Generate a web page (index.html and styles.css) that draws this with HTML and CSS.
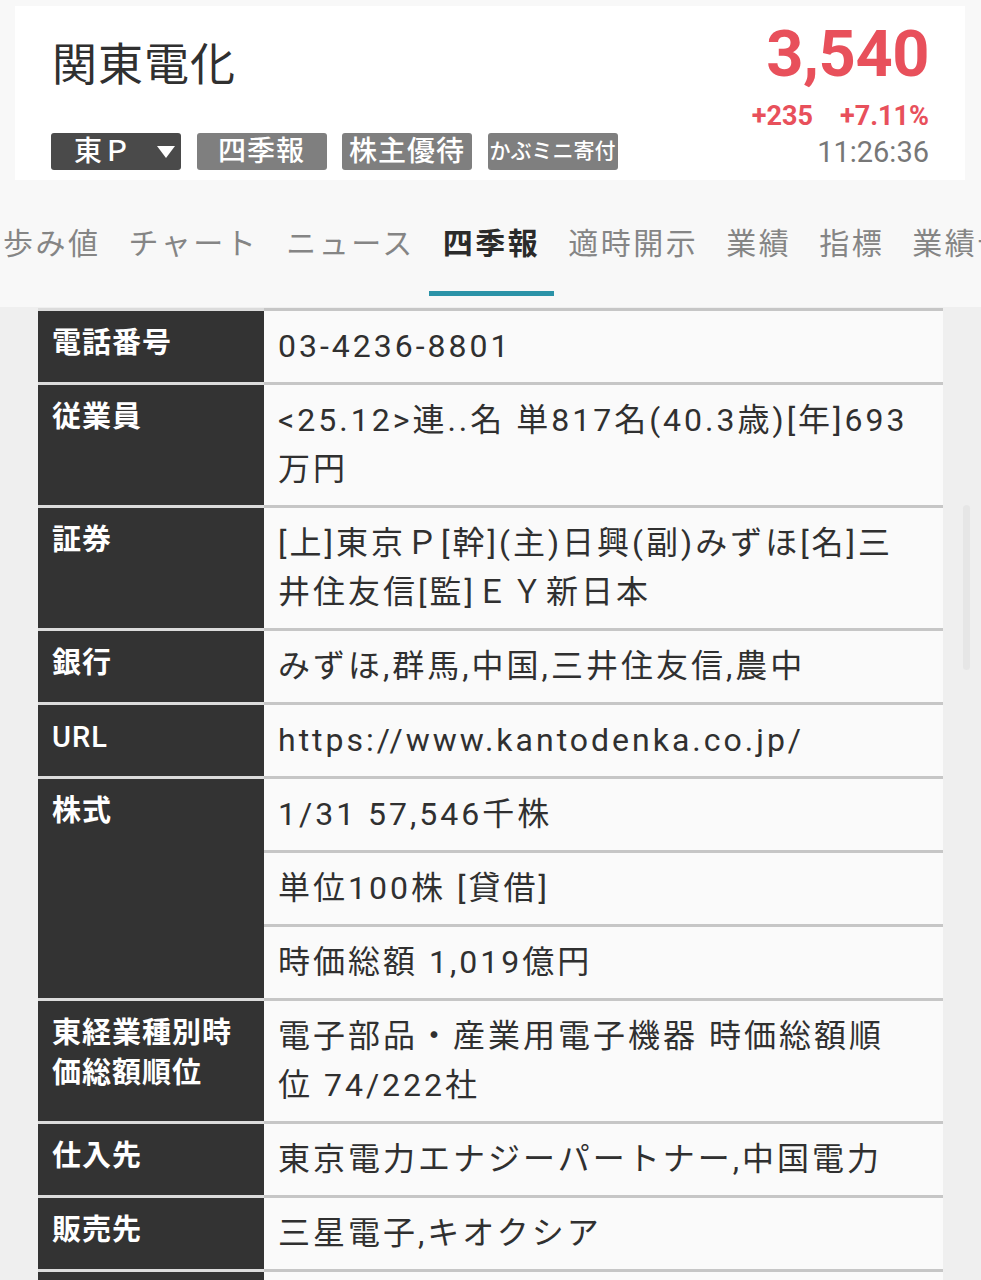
FILE: index.html
```html
<!DOCTYPE html>
<html lang="ja">
<head>
<meta charset="utf-8">
<title>関東電化 四季報</title>
<link rel="stylesheet" href="styles.css">
</head>
<body>
<header class="top">
  <div class="card">
    <div class="card-left">
      <h1 class="name">関東電化</h1>
      <div class="badges">
        <span class="badge badge-market">東Ｐ<svg class="caret" width="18" height="12" viewBox="0 0 18 12"><polygon points="0,0 18,0 9,12" fill="#fff"/></svg></span>
        <span class="badge">四季報</span>
        <span class="badge">株主優待</span>
        <span class="badge badge-small">かぶミニ寄付</span>
      </div>
    </div>
    <div class="card-right">
      <div class="price">3,540</div>
      <div class="change"><span>+235</span><span>+7.11%</span></div>
      <div class="time">11:26:36</div>
    </div>
  </div>
  <nav class="tabbar">
    <div class="tabs">
      <span class="tab">歩み値</span>
      <span class="tab">チャート</span>
      <span class="tab">ニュース</span>
      <span class="tab active">四季報</span>
      <span class="tab">適時開示</span>
      <span class="tab">業績</span>
      <span class="tab">指標</span>
      <span class="tab">業績予想</span>
    </div>
  </nav>
</header>
<main class="content">
  <table class="info">
    <tbody>
      <tr><th>電話番号</th><td>03-4236-8801</td></tr>
      <tr><th>従業員</th><td>&lt;25.12&gt;連..名 単817名(40.3歳)[年]693万円</td></tr>
      <tr><th>証券</th><td>[上]東京Ｐ[幹](主)日興(副)みずほ[名]三井住友信[監]ＥＹ新日本</td></tr>
      <tr><th>銀行</th><td>みずほ,群馬,中国,三井住友信,農中</td></tr>
      <tr><th class="plain">URL</th><td>https://www.kantodenka.co.jp/</td></tr>
      <tr><th rowspan="3">株式</th><td>1/31 57,546千株</td></tr>
      <tr><td>単位100株 [貸借]</td></tr>
      <tr><td>時価総額 1,019億円</td></tr>
      <tr><th>東経業種別時価総額順位</th><td>電子部品・産業用電子機器 時価総額順位 74/222社</td></tr>
      <tr><th>仕入先</th><td>東京電力エナジーパートナー,中国電力</td></tr>
      <tr><th>販売先</th><td>三星電子,キオクシア</td></tr>
      <tr><th>&nbsp;</th><td>&nbsp;</td></tr>
    </tbody>
  </table>
  <div class="scrollbar"></div>
</main>
</body>
</html>
```
FILE: styles.css
```css
* {
  box-sizing: border-box;
}

html, body {
  margin: 0;
  padding: 0;
}

body {
  background: #efefef;
  font-family: Roboto, "Noto Sans CJK JP", sans-serif;
  color: #333;
  width: 981px;
  overflow: hidden;
}

.top {
  background: #f8f8f8;
  padding-top: 6px;
}

.card {
  margin: 0 16px 0 15px;
  background: #ffffff;
  display: flex;
  justify-content: space-between;
  align-items: flex-start;
  padding: 0 36px 10px 36px;
}

.card-left {
  padding-top: 34px;
}

.name {
  margin: 0 0 0 1px;
  font-size: 45px;
  line-height: 52px;
  font-weight: normal;
  letter-spacing: 1px;
  color: #303030;
}

.badges {
  display: flex;
  gap: 15.5px;
  margin-top: 41px;
}

.badge {
  width: 130px;
  height: 37px;
  line-height: 37px;
  border-radius: 3px;
  background: #7f7f7f;
  color: #fff;
  font-size: 28px;
  font-weight: 500;
  letter-spacing: 1px;
  text-align: center;
  white-space: nowrap;
}

.badge-market {
  background: #4a4a4a;
  display: flex;
  align-items: center;
  justify-content: space-between;
  text-align: left;
  padding: 0 6px 0 23px;
}

.caret {
  display: block;
  margin-top: 1px;
}

.badge-small {
  font-size: 21px;
  letter-spacing: 0;
}

.card-right {
  padding-top: 16px;
  text-align: right;
}

.price {
  font-size: 65px;
  line-height: 64px;
  font-weight: 700;
  letter-spacing: -0.5px;
  color: #e8505b;
}

.change {
  margin-top: 13px;
  display: flex;
  justify-content: flex-end;
  gap: 27px;
  font-size: 27px;
  line-height: 34px;
  font-weight: 700;
  color: #e8505b;
}

.time {
  margin-top: 2px;
  font-size: 29px;
  line-height: 34px;
  color: #777;
}

.tabbar {
  padding: 44px 0 11px;
  overflow: hidden;
}

.tabs {
  display: flex;
  margin-left: -11px;
  white-space: nowrap;
}

.tab {
  flex: none;
  padding: 0 14px 27px;
  font-size: 30px;
  line-height: 40px;
  letter-spacing: 2.5px;
  color: #858585;
  border-bottom: 5px solid transparent;
}

.tab.active {
  color: #2b2b2b;
  font-weight: 700;
  border-bottom-color: #2b93a8;
}

.content {
  position: relative;
  padding: 1px 0 0 38px;
}

.info {
  width: 905px;
  table-layout: fixed;
  border-collapse: separate;
  border-spacing: 0;
}

.info th {
  width: 226px;
  background: #333;
  color: #fff;
  font-size: 29px;
  line-height: 40px;
  font-weight: 700;
  letter-spacing: 1px;
  text-align: left;
  vertical-align: top;
  padding: 12px 10px 0 14px;
  border-top: 3px solid #dcdcdc;
}

.info th.plain {
  font-weight: 500;
}

.info td {
  background: #fafafa;
  font-size: 32px;
  line-height: 49px;
  letter-spacing: 3px;
  color: #303030;
  vertical-align: top;
  padding: 11px 32px 11px 14px;
  border-top: 3px solid #c6c6c6;
}

.scrollbar {
  position: absolute;
  left: 963px;
  top: 198px;
  width: 7px;
  height: 165px;
  border-radius: 4px;
  background: #e6e6e6;
}
```
